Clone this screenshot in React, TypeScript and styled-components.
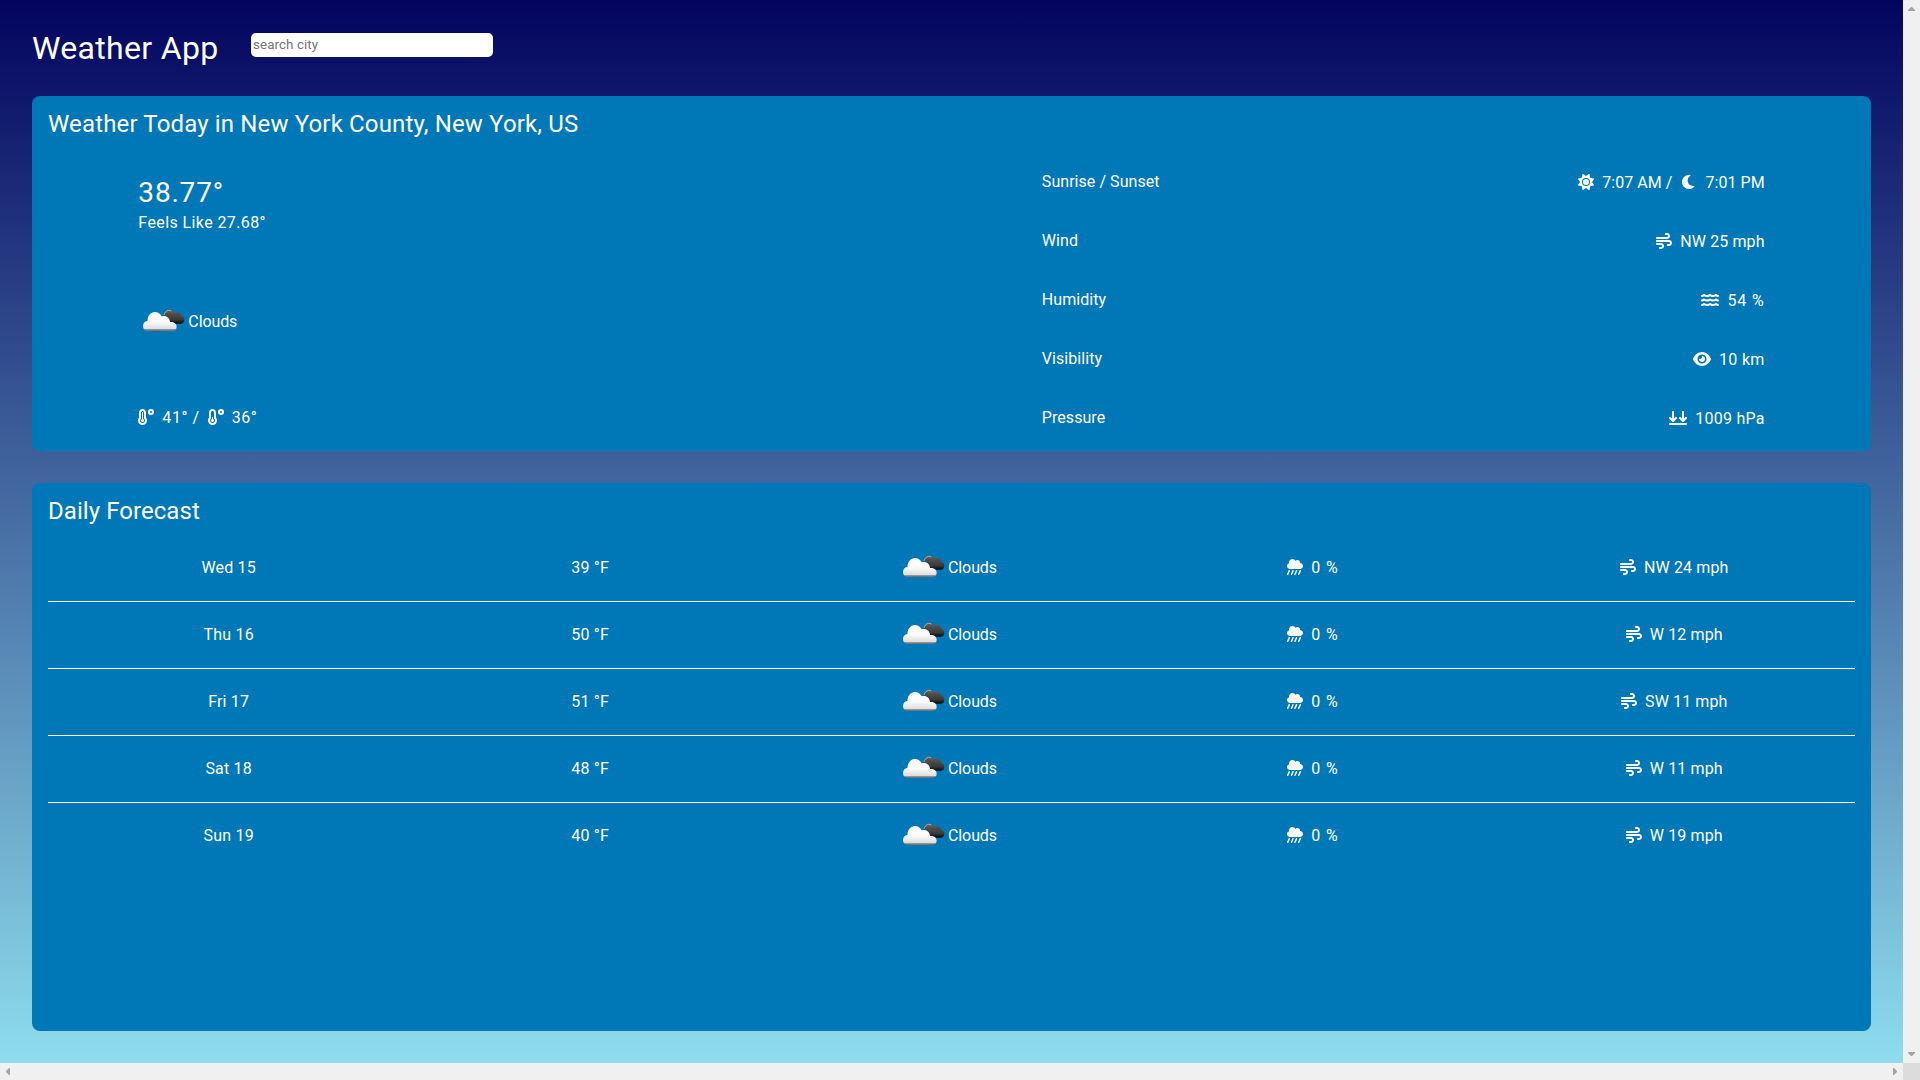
import React from 'react';
import styled, { createGlobalStyle } from 'styled-components';
import {
  FaArrowsDownToLine,
  FaCloudShowersHeavy,
  FaEye,
  FaSun,
  FaTemperatureHigh,
  FaTemperatureLow,
  FaWater,
  FaWind,
} from 'react-icons/fa6';

const GlobalStyle = createGlobalStyle`
  *, *::before, *::after { box-sizing: border-box; }
  body { margin: 0; overflow: hidden; }
`;

const Window = styled.div`
  display: grid;
  grid-template-columns: minmax(0, 1fr) 17px;
  grid-template-rows: minmax(0, 1fr) 17px;
  width: 100vw;
  height: 100vh;
  font-family: Roboto, 'Liberation Sans', sans-serif;
  font-size: 16px;
  line-height: 21px;
  letter-spacing: 0.05px;
  color: #fff;
`;

const Page = styled.main`
  display: flex;
  flex-direction: column;
  padding: 0 32px 32px;
  background: linear-gradient(#03045e, #90e0ef 1080px);
`;

const Header = styled.header`
  display: flex;
  align-items: flex-start;
  gap: 32px;
  height: 96px;
`;

const Title = styled.h1`
  width: 187px;
  margin: 27px 0 0;
  font-size: 32px;
  line-height: 42px;
  font-weight: 400;
  letter-spacing: 0.32px;
  white-space: nowrap;
`;

const Search = styled.input`
  width: 242px;
  height: 24px;
  margin-top: 33px;
  padding: 0 2px 1px;
  border: 0;
  border-radius: 5px;
  outline: none;
  background: #fff;
  font: 13.333px Roboto, 'Liberation Sans', sans-serif;
  letter-spacing: 0.1px;
  &::placeholder { color: #757575; opacity: 1; }
`;

const Card = styled.section<{ $grow?: boolean }>`
  ${p => (p.$grow ? 'flex: 1;' : 'height: 355px; margin-bottom: 32px;')}
  padding: 12px 16px 0;
  border-radius: 8px;
  background: #0077b6;
`;

const Heading = styled.h2<{ $tight?: boolean }>`
  margin: 0;
  font-size: 24px;
  line-height: 32px;
  font-weight: 400;
  letter-spacing: ${p => (p.$tight ? '0.06px' : '0.15px')};
`;

const Today = styled.div`
  display: grid;
  grid-template-columns: 1fr 1fr;
  padding-top: 12px;
`;

const Summary = styled.div`
  display: flex;
  flex-direction: column;
  padding: 22px 10% 0;
`;

const Temperature = styled.div`
  font-size: 28px;
  line-height: 38px;
  letter-spacing: 0.8px;
`;

const FeelsLike = styled.div`
  letter-spacing: 0.4px;
`;

const SummaryCondition = styled.div`
  margin-top: 76px;
`;

const Range = styled.div`
  margin-top: 73px;
  display: flex;
  gap: 8px;
  letter-spacing: 0.55px;
`;

const Details = styled.dl`
  margin: 0;
  padding: 0 10%;
`;

const Detail = styled.div`
  display: flex;
  align-items: center;
  justify-content: space-between;
  height: 59px;
`;

const Term = styled.dt``;

const Value = styled.dd`
  display: flex;
  gap: 9px;
  margin: 2px 0 0;
`;

const Stat = styled.span<{ $wide?: boolean; $track?: number }>`
  display: inline-flex;
  align-items: center;
  gap: 8px;
  white-space: nowrap;
  letter-spacing: ${p => (p.$track === undefined ? 'inherit' : `${p.$track}px`)};
  svg {
    flex: none;
    width: ${p => (p.$wide ? 18 : 16)}px;
    height: ${p => (p.$wide ? 18 : 16)}px;
    margin-bottom: 1px;
  }
`;

const ForecastList = styled.ul`
  margin: 0;
  padding: 8px 0 0;
  list-style: none;
`;

const Day = styled.li`
  display: grid;
  grid-template-columns: repeat(5, 1fr);
  align-items: center;
  justify-items: center;
  height: 67px;
  padding-bottom: 2px;
  border-bottom: 1px solid #fff;
  &:last-child { border-bottom-color: transparent; }
`;

const DayText = styled.span`
  letter-spacing: 0.2px;
`;

const ConditionBox = styled.span<{ $trail?: boolean }>`
  display: flex;
  align-items: center;
  padding-right: ${p => (p.$trail ? '8px' : '0')};
  letter-spacing: -0.1px;
  svg { width: 50px; height: 24px; margin-bottom: 1px; }
`;

const VerticalBar = styled.div`
  display: flex;
  flex-direction: column;
  align-items: center;
  justify-content: space-between;
  padding: 7px 0;
  background: #f0f0f0;
`;

const HorizontalBar = styled.div`
  display: flex;
  align-items: center;
  justify-content: space-between;
  padding: 0 6px;
  background: #f0f0f0;
`;

const Corner = styled.div`
  background: #dcdcdc;
`;

const Arrow = styled.svg`
  display: block;
  fill: #a3a3a3;
`;

const Moon = () => (
  <svg viewBox="0 0 512 512" fill="currentColor" aria-hidden="true">
    <path d="M32 256c0-123.8 100.3-224 223.8-224c11.36 0 29.7 1.668 40.9 3.746c9.616 1.777 11.75 14.63 3.279 19.44C245 86.5 211.2 144.6 211.2 207.8c0 109.7 99.71 193 208.3 172.3c9.561-1.805 16.28 9.324 10.11 16.95C387.9 448.6 324.8 480 255.8 480C132.1 480 32 379.6 32 256z" />
  </svg>
);

const BrokenClouds = () => (
  <svg viewBox="0 0 150 72" aria-hidden="true">
    <defs>
      <linearGradient id="dark" x1="0" y1="2" x2="0" y2="44" gradientUnits="userSpaceOnUse">
        <stop offset="0" stopColor="#6a6461" />
        <stop offset="0.35" stopColor="#4b4b4b" />
        <stop offset="0.7" stopColor="#3a3a3a" />
        <stop offset="1" stopColor="#080808" />
      </linearGradient>
      <linearGradient id="light" x1="0" y1="9" x2="0" y2="67" gradientUnits="userSpaceOnUse">
        <stop offset="0" stopColor="#fff" />
        <stop offset="0.5" stopColor="#fbfbfb" />
        <stop offset="0.86" stopColor="#dedede" />
        <stop offset="0.91" stopColor="#8c8c8c" />
        <stop offset="1" stopColor="#5f5f5f" />
      </linearGradient>
    </defs>
    <path
      fill="url(#dark)"
      d="M77 17C79 8 85 2 93 2c7 0 12 3 15 7 12-3 21 3 22 12 6 1 9 5 9 11 0 8-5 12-12 12H98L77 24z"
    />
    <path d="M78 18c2-8 7-13 14-14 3 0 6 1 8 2" fill="none" stroke="#b9aaa2" strokeWidth="3" />
    <path
      fill="url(#light)"
      d="M30 66c-9 0-15-6-15-15 0-8 5-14 13-15C29 20 38 9 51 9c9 0 16 5 20 13 13-4 24 4 25 17 12-1 20 5 20 14 0 8-5 13-14 13z"
    />
  </svg>
);

const Condition = ({ label, trail }: { label: string; trail?: boolean }) => (
  <ConditionBox $trail={trail}>
    <BrokenClouds />
    {label}
  </ConditionBox>
);

type Reading = { icon: React.ReactNode; text: string; wide?: boolean; track?: number };

const details: { term: string; values: Reading[] }[] = [
  {
    term: 'Sunrise / Sunset',
    values: [
      { icon: <FaSun />, text: '7:07 AM /' },
      { icon: <Moon />, text: '7:01 PM' },
    ],
  },
  { term: 'Wind', values: [{ icon: <FaWind />, text: 'NW 25 mph', track: 0.12 }] },
  { term: 'Humidity', values: [{ icon: <FaWater />, text: '54 %', wide: true, track: 0.9 }] },
  { term: 'Visibility', values: [{ icon: <FaEye />, text: '10 km', wide: true, track: 0.3 }] },
  { term: 'Pressure', values: [{ icon: <FaArrowsDownToLine />, text: '1009 hPa', wide: true, track: 0.25 }] },
];

const days = [
  { day: 'Wed 15', temp: 39, wind: 'NW 24 mph' },
  { day: 'Thu 16', temp: 50, wind: 'W 12 mph' },
  { day: 'Fri 17', temp: 51, wind: 'SW 11 mph' },
  { day: 'Sat 18', temp: 48, wind: 'W 11 mph' },
  { day: 'Sun 19', temp: 40, wind: 'W 19 mph' },
];

export default function App() {
  return (
    <>
      <GlobalStyle />
      <Window>
        <Page>
          <Header>
            <Title>Weather App</Title>
            <Search placeholder="search city" />
          </Header>
          <Card>
            <Heading>Weather Today in New York County, New York, US</Heading>
            <Today>
              <Summary>
                <Temperature>38.77°</Temperature>
                <FeelsLike>Feels Like 27.68°</FeelsLike>
                <SummaryCondition>
                  <Condition label="Clouds" />
                </SummaryCondition>
                <Range>
                  <Stat><FaTemperatureHigh />41° /</Stat>
                  <Stat><FaTemperatureLow />36°</Stat>
                </Range>
              </Summary>
              <Details>
                {details.map(({ term, values }) => (
                  <Detail key={term}>
                    <Term>{term}</Term>
                    <Value>
                      {values.map(({ icon, text, wide, track }) => (
                        <Stat key={text} $wide={wide} $track={track}>{icon}{text}</Stat>
                      ))}
                    </Value>
                  </Detail>
                ))}
              </Details>
            </Today>
          </Card>
          <Card $grow>
            <Heading $tight>Daily Forecast</Heading>
            <ForecastList>
              {days.map(({ day, temp, wind }) => (
                <Day key={day}>
                  <DayText>{day}</DayText>
                  <DayText>{temp} °F</DayText>
                  <Condition label="Clouds" trail />
                  <Stat $track={0.8}><FaCloudShowersHeavy />0 %</Stat>
                  <Stat $track={0.12}><FaWind />{wind}</Stat>
                </Day>
              ))}
            </ForecastList>
          </Card>
        </Page>
        <VerticalBar>
          <Arrow width="7" height="4"><path d="M3 0h1l3 3v1H0V3z" /></Arrow>
          <Arrow width="7" height="4"><path d="M3 4h1l3-3V0H0v1z" /></Arrow>
        </VerticalBar>
        <HorizontalBar>
          <Arrow width="4" height="7"><path d="M0 3v1l3 3h1V0H3z" /></Arrow>
          <Arrow width="4" height="7"><path d="M4 3v1L1 7H0V0h1z" /></Arrow>
        </HorizontalBar>
        <Corner />
      </Window>
    </>
  );
}
